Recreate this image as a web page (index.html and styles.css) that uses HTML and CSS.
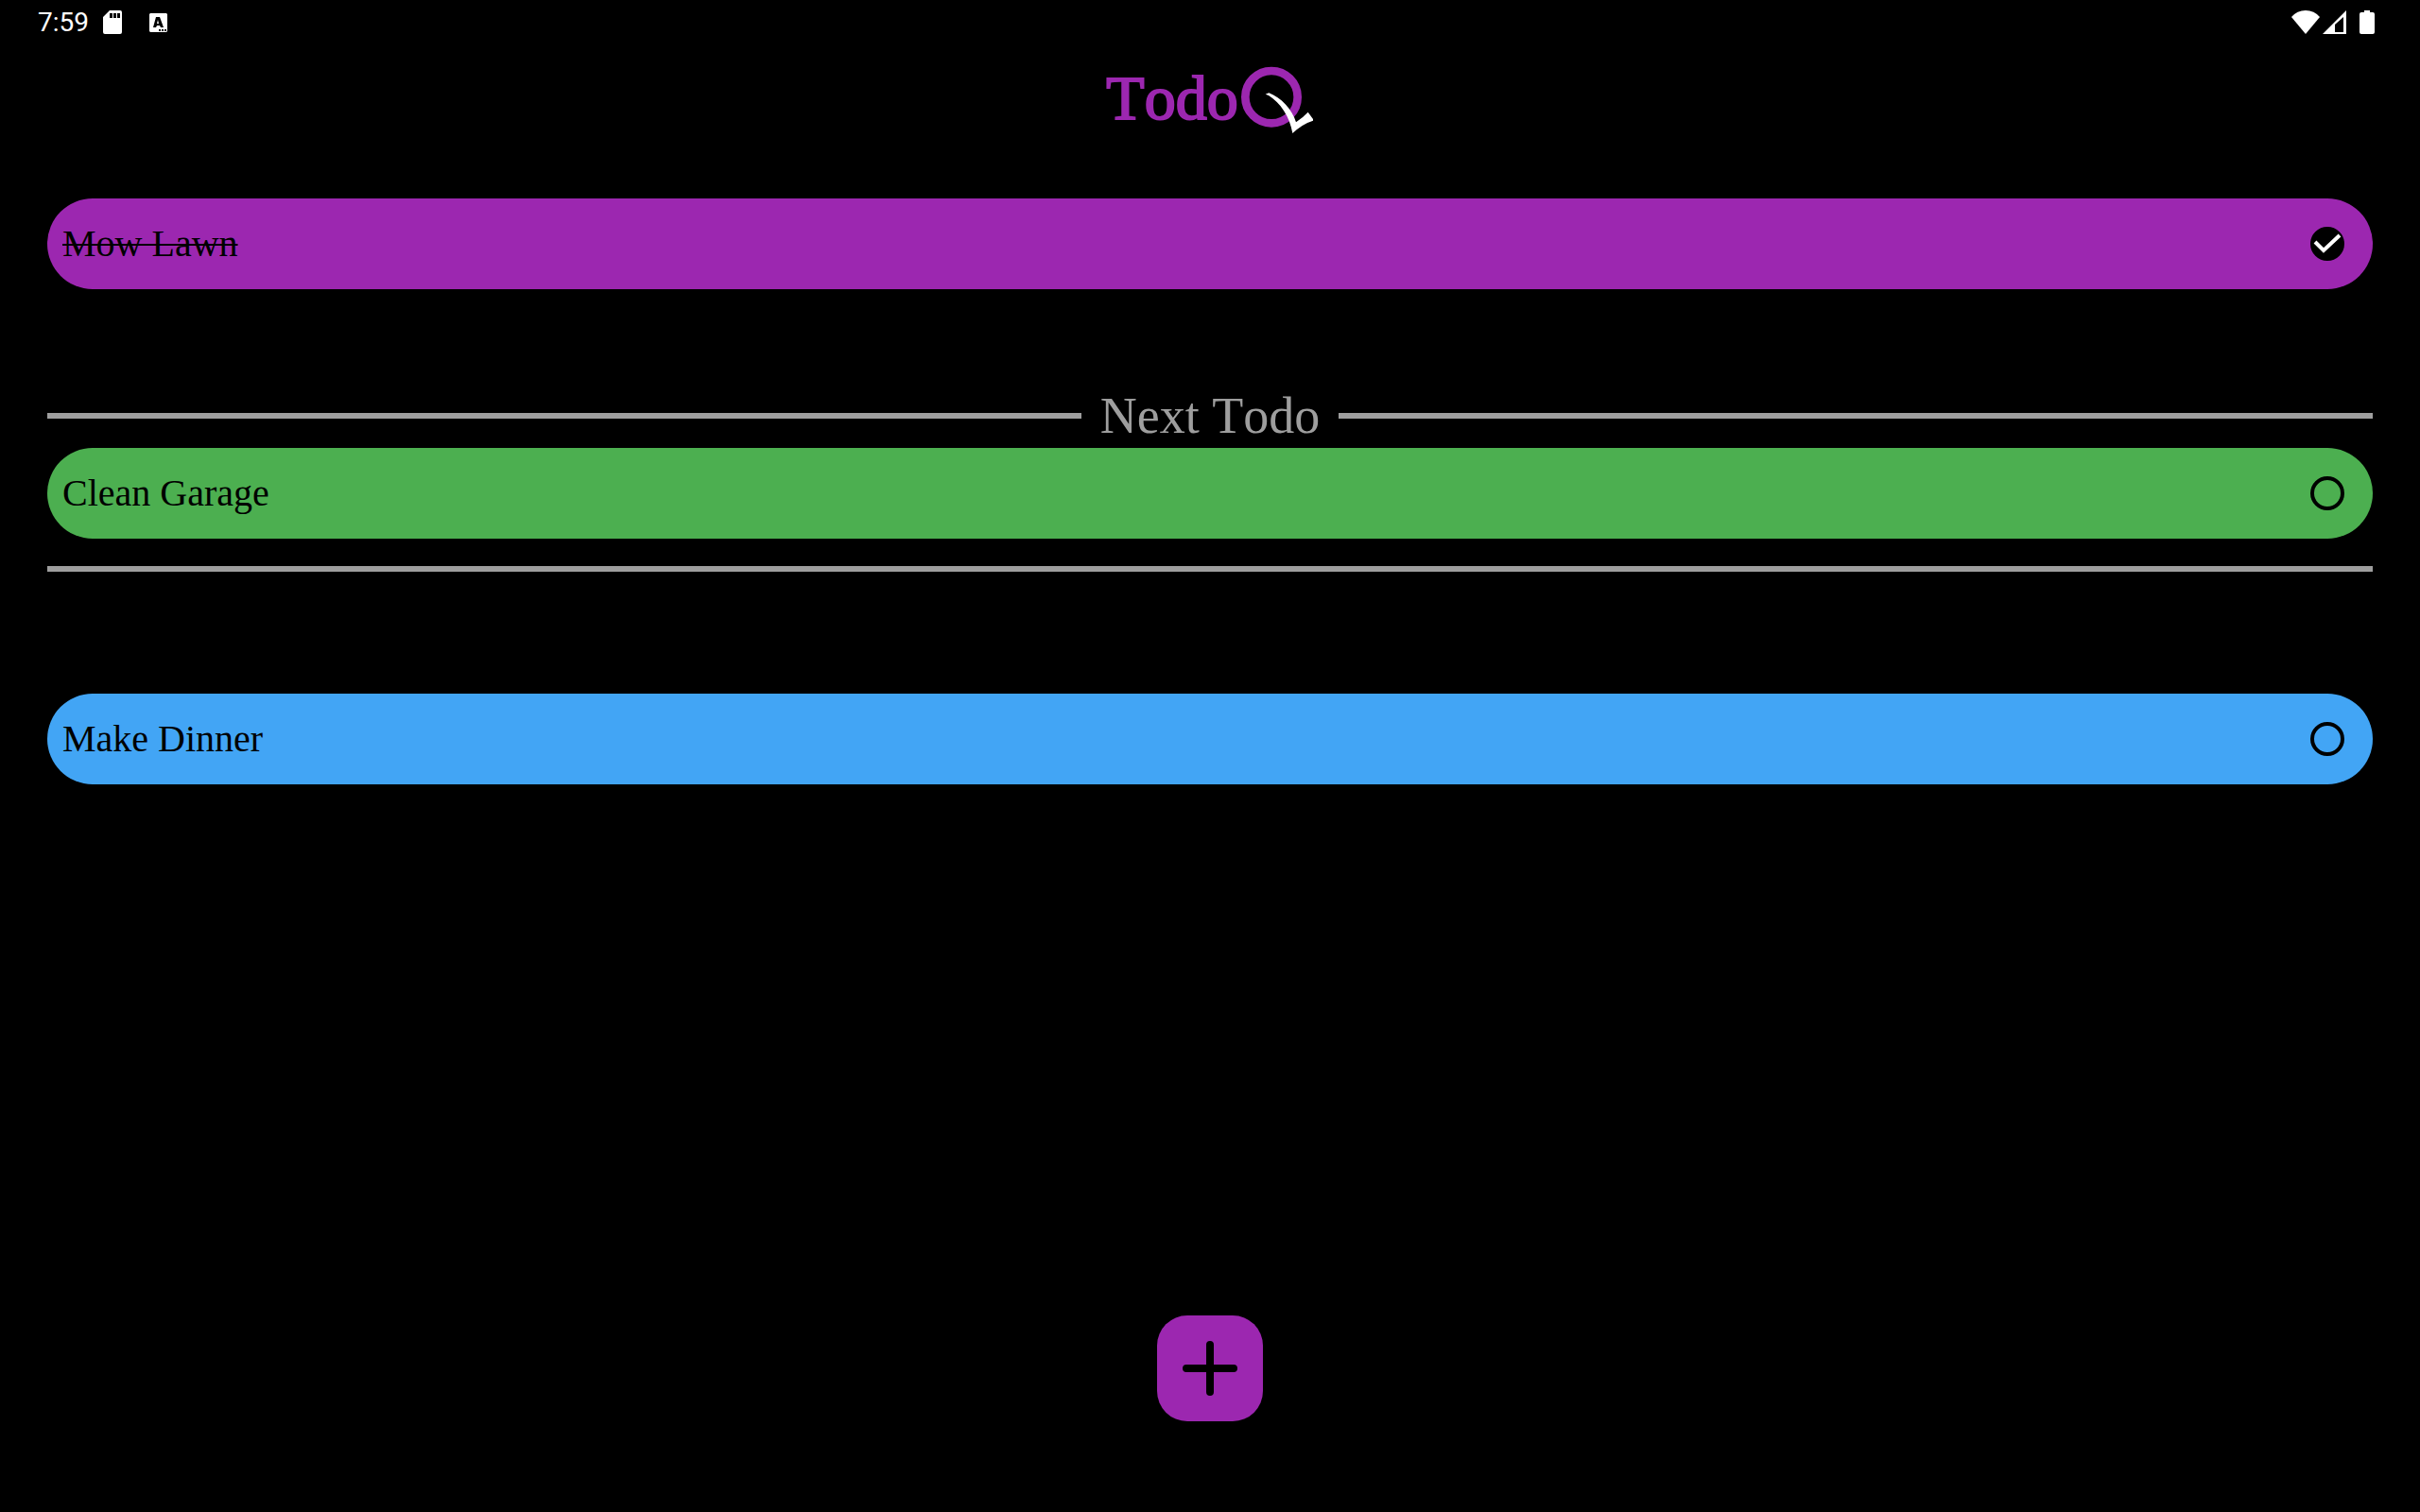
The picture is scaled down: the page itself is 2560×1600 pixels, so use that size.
FILE: index.html
```html
<!DOCTYPE html>
<html lang="en">
<head>
<meta charset="utf-8">
<meta name="viewport" content="width=device-width, initial-scale=1">
<title>TodoQ</title>
<link rel="stylesheet" href="styles.css">
</head>
<body>
<div class="status-bar">
  <div class="status-group">
    <time class="clock">7:59</time>
    <svg class="icon-card" width="20" height="26" viewBox="0 0 20 26" aria-hidden="true"><path fill="#fff" fill-rule="evenodd" d="M7 0H18Q20 0 20 2V23Q20 25 18 25H2Q0 25 0 23V7ZM7 3V8H10V3ZM11 3V8H14V3ZM15 3V8H18V3Z"/></svg>
    <svg class="icon-keyboard" width="19" height="20" viewBox="0 0 19 20" aria-hidden="true"><path fill="#fff" fill-rule="evenodd" d="M1 0H18L19 1V19L18 20H1L0 19V1ZM7 4L4 15H7L8 13H11L12 15H15L11 4ZM9 7L10 11H8ZM10 17V19H12V17ZM13 17V19H15V17ZM16 17V19H18V17Z"/></svg>
  </div>
  <div class="status-group">
    <svg width="30" height="26" viewBox="0 0 30 26" aria-hidden="true"><path fill="#fff" d="M0 7Q6 0 15 0T30 7L15 25Z"/></svg>
    <svg class="icon-signal" width="26" height="26" viewBox="0 0 26 26" aria-hidden="true"><path fill="#fff" fill-rule="evenodd" d="M0 25L25 0V25ZM13 15V23H22V7Z"/></svg>
    <svg class="icon-battery" width="16" height="26" viewBox="0 0 16 26" aria-hidden="true"><path fill="#fff" d="M5 0H11V2H14Q16 2 16 4V23Q16 25 14 25H2Q0 25 0 23V4Q0 2 2 2H5Z"/></svg>
  </div>
</div>

<header class="brand">
  <h1 class="brand-name">Todo</h1>
  <svg class="brand-mark" width="78" height="72" viewBox="483 60 234 216" role="img" aria-label="Q">
    <circle cx="582" cy="158" r="83" fill="none" stroke="#9c27b0" stroke-width="26"/>
    <path fill="#fff" d="M563 149L574 145C612 159 648 198 660 238Q681 224 698 206L714 228V233Q681 243 649 273C640 220 610 176 573 153Z"/>
  </svg>
</header>

<main class="content">
  <label class="todo todo-purple">
    <s class="todo-title">Mow Lawn</s>
    <span class="check"><input type="checkbox" checked><svg width="36" height="36" viewBox="0 0 36 36" aria-hidden="true"><path fill="none" stroke="#fff" stroke-width="4" d="M5 16L14 25L31 9"/></svg></span>
  </label>

  <section class="next">
    <h2 class="next-title">Next Todo</h2>
    <label class="todo todo-green">
      <span class="todo-title">Clean Garage</span>
      <span class="check"><input type="checkbox"></span>
    </label>
    <hr class="rule">
  </section>

  <label class="todo todo-blue">
    <span class="todo-title">Make Dinner</span>
    <span class="check"><input type="checkbox"></span>
  </label>
</main>

<footer class="actions">
  <button class="add" type="button" aria-label="Add todo">
    <svg width="60" height="60" viewBox="0 0 60 60" aria-hidden="true"><path fill="none" stroke="#000" stroke-width="8" stroke-linecap="round" d="M30 5V55M5 30H55"/></svg>
  </button>
</footer>
</body>
</html>
```
FILE: styles.css
```css
* {
  box-sizing: border-box;
}

body {
  margin: 0;
  min-height: 100vh;
  display: flex;
  flex-direction: column;
  background: #000;
  font-family: "Palatino Linotype", Palatino, "Liberation Serif", serif;
  font-kerning: none;
}

svg {
  display: block;
}

.status-bar {
  height: 48px;
  padding: 0 48px 0 40px;
  display: flex;
  align-items: center;
  justify-content: space-between;
  color: #fff;
}

.status-group {
  display: flex;
  align-items: center;
}

.clock {
  font: 28px/32px Roboto, sans-serif;
}

.icon-card {
  margin-left: 15px;
}

.icon-keyboard {
  margin-left: 29px;
}

.icon-signal {
  margin-left: 3px;
}

.icon-battery {
  margin-left: 13px;
}

.brand {
  height: 116px;
  display: flex;
  align-items: center;
  justify-content: center;
  gap: 2px;
}

.brand-name {
  margin: 0;
  padding-bottom: 4px;
  color: #9c27b0;
  font-size: 66px;
  font-weight: 400;
  line-height: 72px;
  -webkit-text-stroke: 2px #9c27b0;
}

.content {
  padding: 46px 50px;
}

.todo {
  height: 96px;
  padding: 0 30px 0 16px;
  display: flex;
  align-items: center;
  justify-content: space-between;
  border-radius: 48px;
  color: #000;
  font-size: 40px;
  line-height: 48px;
}

.todo-purple {
  background: #9c27b0;
}

.todo-green {
  background: #4caf50;
}

.todo-blue {
  background: #42a5f5;
}

.todo-title {
  text-decoration-thickness: 2px;
}

.check {
  display: grid;
}

.check > * {
  grid-area: 1 / 1;
}

.check input {
  appearance: none;
  width: 36px;
  height: 36px;
  margin: 0;
  border: 4px solid #000;
  border-radius: 50%;
}

.check input:checked {
  background: #000;
}

.check svg {
  z-index: 1;
  pointer-events: none;
}

.next {
  margin: 104px 0 129px;
}

.next-title {
  margin: 0 0 4px;
  display: flex;
  align-items: center;
  gap: 20px;
  color: #9e9e9e;
  font-size: 54px;
  font-weight: 400;
  line-height: 60px;
}

.next-title::before,
.next-title::after {
  content: "";
  flex: 1;
  height: 6px;
  background: #9e9e9e;
}

.rule {
  height: 6px;
  margin: 29px 0 0;
  border: 0;
  background: #9e9e9e;
}

.actions {
  margin-top: auto;
  padding-bottom: 96px;
  display: flex;
  justify-content: center;
}

.add {
  width: 112px;
  height: 112px;
  padding: 0;
  display: grid;
  place-items: center;
  border: 0;
  border-radius: 32px;
  background: #9c27b0;
}
```
